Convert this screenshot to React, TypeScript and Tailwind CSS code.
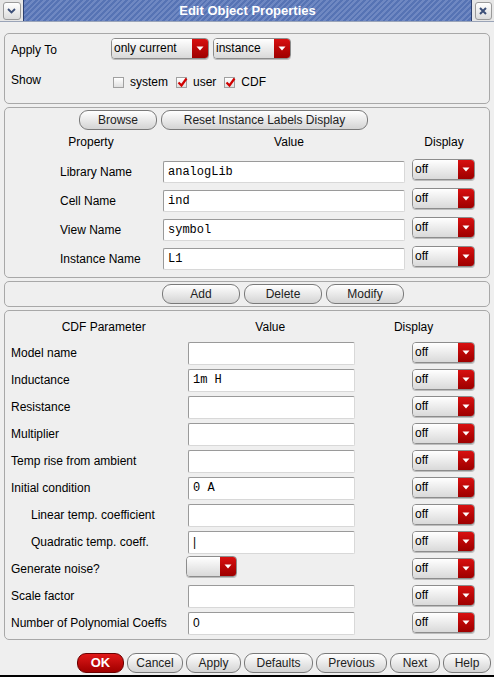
import React from 'react';

const sans = "font-['Liberation_Sans',Arial,sans-serif]";

function Drop({ w, text }: { w: number; text?: string }) {
  return (
    <div
      className="flex h-[21px] shrink-0 overflow-hidden rounded-[4px] border border-[#8c8c8c] shadow-[0_1px_0_#bdbdbd]"
      style={{ width: w }}
    >
      <div className="flex-1 bg-gradient-to-b from-white to-[#d9d9d9] pl-[2px] text-[12px] leading-[19px] text-black">
        {text}
      </div>
      <div className="flex w-[16px] items-center justify-center bg-gradient-to-b from-[#d81010] to-[#9e0000]">
        <svg width="8" height="5" viewBox="0 0 8 5">
          <path d="M0.5 0.5 L7.5 0.5 L4 4.5 Z" fill="#fff" />
        </svg>
      </div>
    </div>
  );
}

function Check({ on, label }: { on?: boolean; label: string }) {
  return (
    <div className="flex items-center gap-[6px]">
      <div className="relative h-[11px] w-[11px] border border-[#a0a0a0] bg-gradient-to-b from-white to-[#e0e0e0]">
        {on && (
          <svg className="absolute left-[0px] top-[-1px]" width="11" height="11" viewBox="0 0 11 11">
            <path d="M1.5 5.5 L4.5 8.5 L9.5 1.5" stroke="#d00000" strokeWidth="2.2" fill="none" />
          </svg>
        )}
      </div>
      <span className="text-[12px]">{label}</span>
    </div>
  );
}

function Btn({ w, label, ok }: { w: number; label: string; ok?: boolean }) {
  return (
    <div
      className={
        ok
          ? 'flex h-[20px] shrink-0 items-center justify-center rounded-[9px] border border-[#6a0000] bg-gradient-to-b from-[#e01818] to-[#a00000] text-[13px] font-bold text-white'
          : 'flex h-[20px] shrink-0 items-center justify-center rounded-[9px] border border-[#7a7a7a] bg-gradient-to-b from-white to-[#d4d4d4] text-[12px] text-[#222]'
      }
      style={{ width: w }}
    >
      {label}
    </div>
  );
}

function Field({ w, h, value, mono }: { w: number; h: number; value?: string; mono?: boolean }) {
  return (
    <div
      className={`shrink-0 rounded-[2px] border border-[#9a9a9a] border-b-[#d8d8d8] border-r-[#d8d8d8] bg-white pl-[4px] text-[12px] text-black ${
        mono ? "font-['Liberation_Mono','Courier_New',monospace]" : ''
      }`}
      style={{ width: w, height: h, lineHeight: `${h - 2}px` }}
    >
      {value}
    </div>
  );
}

const props = [
  ['Library Name', 'analogLib'],
  ['Cell Name', 'ind'],
  ['View Name', 'symbol'],
  ['Instance Name', 'L1'],
];

type Cdf = { label: string; value?: string; indent?: boolean; mono?: boolean; drop?: boolean };
const cdf: Cdf[] = [
  { label: 'Model name' },
  { label: 'Inductance', value: '1m H', mono: true },
  { label: 'Resistance' },
  { label: 'Multiplier' },
  { label: 'Temp rise from ambient' },
  { label: 'Initial condition', value: '0 A', mono: true },
  { label: 'Linear temp. coefficient', indent: true },
  { label: 'Quadratic temp. coeff.', indent: true, value: '|' },
  { label: 'Generate noise?', drop: true },
  { label: 'Scale factor' },
  { label: 'Number of Polynomial Coeffs', value: '0' },
];

export default function App() {
  return (
    <div className={`${sans} relative h-[677px] w-[494px] overflow-hidden bg-[#efefef] text-[12px] text-black`}>
      {/* title bar */}
      <div className="flex h-[22px] items-stretch border-b border-[#9aa4b8]">
        <div className="flex w-[23px] items-center justify-center bg-[#e6e6e6]">
          <div className="flex h-[18px] w-[18px] items-center justify-center rounded-[3px] border border-[#9a9a9a] bg-gradient-to-b from-white to-[#dcdcdc]">
            <svg width="9" height="6" viewBox="0 0 9 6">
              <path d="M1 1 L4.5 4.5 L8 1" stroke="#3c4f78" strokeWidth="1.8" fill="none" />
            </svg>
          </div>
        </div>
        <div className="flex flex-1 items-center justify-center border-l border-r border-[#2b3f70] bg-[repeating-linear-gradient(135deg,#5673b4_0px,#5673b4_2px,#6f88c2_2px,#6f88c2_4px)] text-[13px] font-bold text-white">
          Edit Object Properties
        </div>
        <div className="flex w-[22px] items-center justify-center bg-[#e6e6e6]">
          <div className="flex h-[18px] w-[17px] items-center justify-center rounded-[3px] border border-[#9a9a9a] bg-gradient-to-b from-white to-[#dcdcdc]">
            <svg width="8" height="8" viewBox="0 0 8 8">
              <path d="M1 1 L7 7 M7 1 L1 7" stroke="#3c4f78" strokeWidth="2" />
            </svg>
          </div>
        </div>
      </div>

      {/* apply to / show */}
      <div className="mx-[4px] mt-[11px] h-[71px] rounded-[5px] border border-[#a8a8a8] pl-[6px] pt-[4px]">
        <div className="flex items-center">
          <span className="w-[100px] pt-[2px]">Apply To</span>
          <div className="flex gap-[4px]">
            <Drop w={98} text="only current" />
            <Drop w={78} text="instance" />
          </div>
        </div>
        <div className="mt-[12px] flex">
          <span className="w-[102px]">Show</span>
          <div className="mt-[2px] flex gap-[8px]">
            <Check label="system" />
            <Check on label="user" />
            <Check on label="CDF" />
          </div>
        </div>
      </div>

      {/* properties */}
      <div className="mx-[4px] mt-[3px] h-[171px] rounded-[5px] border border-[#a8a8a8]">
        <div className="mt-[2px] flex gap-[4px] pl-[74px]">
          <Btn w={78} label="Browse" />
          <Btn w={207} label="Reset Instance Labels Display" />
        </div>
        <div className="mt-[5px] flex h-[14px] items-center leading-[14px]">
          <span className="w-[172px] text-center">Property</span>
          <span className="w-[224px] text-center">Value</span>
          <span className="w-[86px] text-center">Display</span>
        </div>
        <div className="mt-[10px] flex flex-col gap-[5px]">
          {props.map(([l, v]) => (
            <div key={l} className="flex items-start">
              <span className="mt-[2px] w-[158px] shrink-0 whitespace-nowrap pl-[55px] leading-[22px]">{l}</span>
              <div className="mt-[2px]">
                <Field w={242} h={22} value={v} mono />
              </div>
              <div className="ml-[7px]">
                <Drop w={63} text="off" />
              </div>
            </div>
          ))}
        </div>
      </div>

      {/* add / delete / modify */}
      <div className="mx-[4px] mt-[3px] h-[26px] rounded-[5px] border border-[#a8a8a8] pt-[2px]">
        <div className="flex gap-[4px] pl-[157px]">
          <Btn w={78} label="Add" />
          <Btn w={78} label="Delete" />
          <Btn w={78} label="Modify" />
        </div>
      </div>

      {/* cdf params */}
      <div className="mx-[4px] mt-[3px] h-[330px] rounded-[5px] border border-[#a8a8a8]">
        <div className="mt-[9px] flex h-[14px] items-center leading-[14px]">
          <span className="w-[212px] text-center">CDF Parameter</span>
          <span className="w-[146px] text-center">Value</span>
          <span className="w-[162px] text-center">Display</span>
        </div>
        <div className="mt-[8px] flex flex-col gap-[4px]">
          {cdf.map((r) => (
            <div key={r.label} className="flex h-[23px] items-start">
              <span
                className={`w-[183px] shrink-0 whitespace-nowrap leading-[22px] ${r.indent ? 'pl-[26px]' : 'pl-[6px]'}`}
              >
                {r.label}
              </span>
              {r.drop ? (
                <div className="-mt-[2px] ml-[-2px] w-[169px]">
                  <Drop w={51} />
                </div>
              ) : (
                <Field w={167} h={23} value={r.value} mono={r.mono} />
              )}
              <div className="ml-[57px]">
                <Drop w={63} text="off" />
              </div>
            </div>
          ))}
        </div>
      </div>

      {/* bottom buttons */}
      <div className="mt-[13px] flex justify-end gap-[3px] pr-[3px]">
        <Btn ok w={47} label="OK" />
        <Btn w={56} label="Cancel" />
        <Btn w={55} label="Apply" />
        <Btn w={69} label="Defaults" />
        <Btn w={71} label="Previous" />
        <Btn w={50} label="Next" />
        <Btn w={48} label="Help" />
      </div>

      <div className="absolute bottom-0 left-0 h-[2px] w-full bg-black" />
    </div>
  );
}
